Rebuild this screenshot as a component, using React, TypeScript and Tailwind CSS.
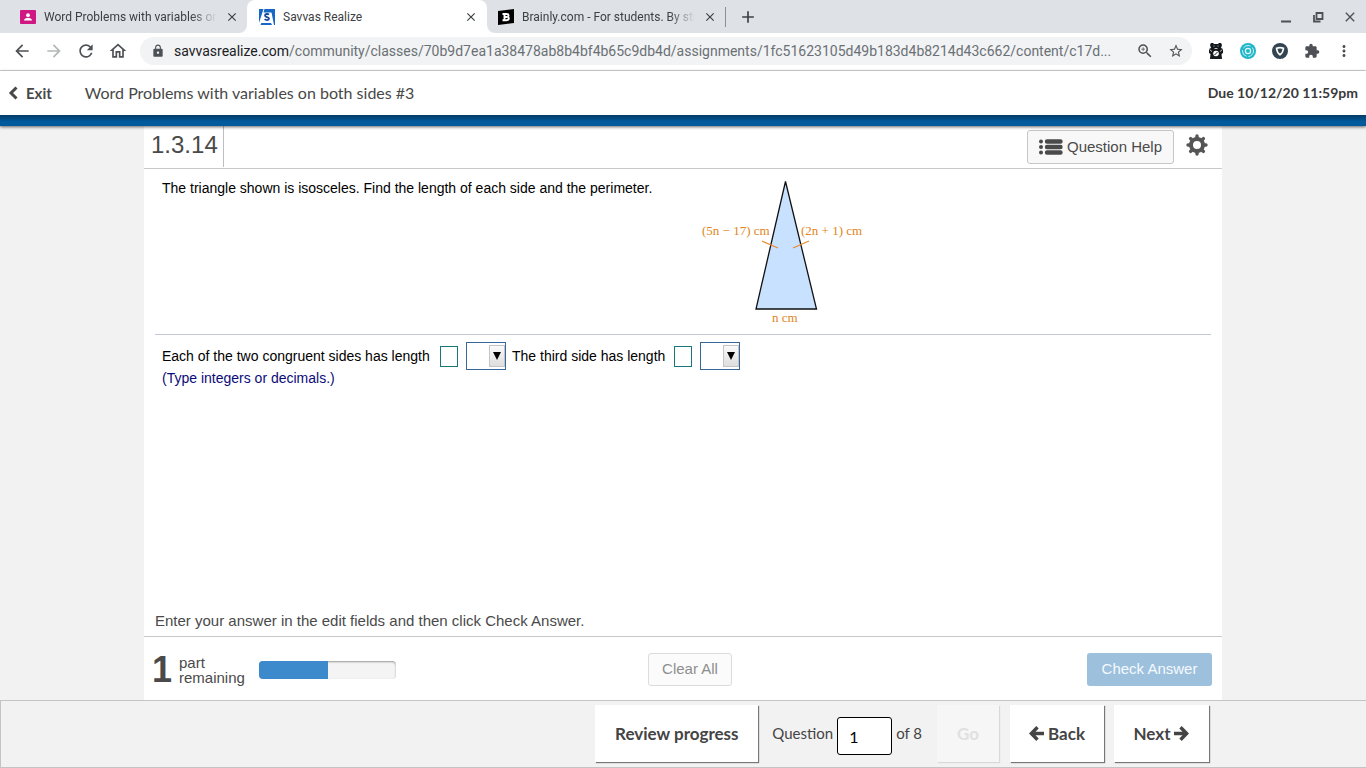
import type { ReactNode } from 'react';
import {
  MdAdd,
  MdArrowBack,
  MdArrowForward,
  MdClose,
  MdExtension,
  MdLock,
  MdMoreVert,
  MdOutlineHome,
  MdRefresh,
  MdStarBorder,
  MdZoomIn,
} from 'react-icons/md';

function ClassroomIcon() {
  return (
    <svg viewBox="0 0 16 14" className="h-[14px] w-4 shrink-0" aria-hidden="true">
      <rect width="16" height="14" rx="1" fill="#d01884" />
      <circle cx="8" cy="5.2" r="1.9" fill="#fff" />
      <path d="M4 10.6c0-2 2.4-2.8 4-2.8s4 .8 4 2.8z" fill="#fff" />
    </svg>
  );
}

function SavvasIcon() {
  return (
    <svg viewBox="0 0 16 16" className="h-4 w-4 shrink-0" aria-hidden="true">
      <path d="M0 0h4.500L0 14zM5.500 0H16v16h-1L12.500 3.500H4.500zM1.500 16l.8-2H12l1 2z" fill="#1668c7" />
      <path d="M10 5.700C8.800 4.600 6 4.700 6 6.500c0 1.900 4 1.200 4 3.100 0 1.800-3 1.900-4.400.6" fill="none" stroke="#184a9c" strokeWidth="1.800" />
    </svg>
  );
}

function BrainlyIcon() {
  return (
    <svg viewBox="0 0 16 16" className="h-4 w-4 shrink-0" aria-hidden="true">
      <path d="M0 2 16 0v14L0 16z" fill="#000" />
      <path d="M4.500 5h4.200c2.400 0 2.200 2.700.6 3 2.200.2 2 3.300-.6 3.300H4.500M6.500 5v6M6.500 8h2.500" fill="none" stroke="#fff" strokeWidth="1.900" />
    </svg>
  );
}

function Tab({ icon, title, active, className }: { icon: ReactNode; title: string; active?: boolean; className: string }) {
  return (
    <div className={`flex items-center ${className}`}>
      {icon}
      <button
        type="button"
        className={`ml-2 min-w-0 flex-1 overflow-hidden text-left text-xs whitespace-nowrap text-[#3c4043] ${
          active ? '' : '[mask-image:linear-gradient(to_right,black_85%,transparent)]'
        }`}
      >
        {title}
      </button>
      <button type="button" aria-label="Close tab" className="ml-2 text-[#3c4043]">
        <MdClose size={14} />
      </button>
    </div>
  );
}

function TabStrip() {
  return (
    <div className="flex h-[33px] bg-[#dee1e6]">
      <div className="flex w-[247px] bg-white">
        <Tab className="w-full rounded-br-lg bg-[#dee1e6] pr-2 pl-5" icon={<ClassroomIcon />} title="Word Problems with variables on" />
      </div>
      <Tab active className="w-60 rounded-t-lg bg-white pr-[9px] pl-3" icon={<SavvasIcon />} title="Savvas Realize" />
      <div className="flex w-[238px] bg-white">
        <Tab className="w-full rounded-bl-lg bg-[#dee1e6] pr-2 pl-[11px]" icon={<BrainlyIcon />} title="Brainly.com - For students. By stu" />
      </div>
      <div className="h-5 w-px self-center bg-[#8b9095]" />
      <button type="button" aria-label="New tab" className="ml-3 text-[#3c4043]">
        <MdAdd size={20} />
      </button>
      <div className="ml-auto flex items-center gap-4 pr-2 text-[#4d5155]">
        <button type="button" aria-label="Minimize">
          <svg viewBox="0 0 16 16" className="h-4 w-4" fill="none" stroke="currentColor" strokeWidth="2">
            <path d="M3 12.500h10" />
          </svg>
        </button>
        <button type="button" aria-label="Restore">
          <svg viewBox="0 0 16 16" className="h-4 w-4" fill="none" stroke="currentColor" strokeWidth="1.800">
            <path d="M6.500 4h6v6h-6zM4 6v6.500h6.500" />
          </svg>
        </button>
        <button type="button" aria-label="Close window">
          <MdClose size={16} />
        </button>
      </div>
    </div>
  );
}

function Toolbar() {
  return (
    <div className="flex h-[38px] items-center border-b border-[#d5d7da] bg-white pr-[14px] pb-px pl-3 text-[#4d5155]">
      <div className="flex gap-3">
        <button type="button" aria-label="Back"><MdArrowBack size={20} /></button>
        <button type="button" aria-label="Forward" className="text-[#b4b6b8]"><MdArrowForward size={20} /></button>
        <button type="button" aria-label="Reload"><MdRefresh size={20} /></button>
        <button type="button" aria-label="Home"><MdOutlineHome size={20} /></button>
      </div>
      <div className="ml-3 flex h-7 min-w-0 flex-1 items-center rounded-full bg-[#f1f3f4] pr-2 pl-[11px]">
        <MdLock size={14} className="shrink-0" />
        <div className="ml-[9px] min-w-0 flex-1 truncate text-sm text-[#6b7074]">
          <span className="text-[#202124]">savvasrealize.com</span>
          /community/classes/70b9d7ea1a38478ab8b4bf4b65c9db4d/assignments/1fc51623105d49b183d4b8214d43c662/content/c17d...
        </div>
        <button type="button" aria-label="Zoom" className="ml-4"><MdZoomIn size={18} /></button>
        <button type="button" aria-label="Bookmark" className="ml-[14px]"><MdStarBorder size={16} /></button>
      </div>
      <div className="ml-4 flex items-center gap-4">
        <button type="button" aria-label="Bear extension">
          <svg viewBox="0 0 16 16" className="h-4 w-4">
            <path d="M3 0h2l1 1h4l1-1h2l1 2-1 3 2 1v4l-1.500 1 .5 5H2l.5-5L1 10V6l2-1-1-3z" fill="#15191c" />
            <circle cx="8" cy="10.500" r="2.800" fill="#fff" />
            <path d="M6.500 12 9.500 9" stroke="#15191c" />
            <path d="M1.500 6.500 4 8.500M14.500 6.500 12 8.500M5.500 3h1M9.500 3h1M6.500 5.500h3" stroke="#b9c4c8" />
          </svg>
        </button>
        <button type="button" aria-label="Sync extension">
          <svg viewBox="0 0 16 16" className="h-4 w-4" fill="none">
            <circle cx="8" cy="8" r="8" fill="#20b5c8" />
            <circle cx="8" cy="8" r="5.500" stroke="#c9f4f8" strokeDasharray="8 2" />
            <circle cx="8" cy="8" r="2.600" stroke="#e2fafc" strokeWidth="1.200" />
          </svg>
        </button>
        <button type="button" aria-label="Shield extension">
          <svg viewBox="0 0 16 16" className="h-4 w-4" fill="none">
            <circle cx="8" cy="8" r="8" fill="#344552" />
            <path d="M4.500 5.200Q8 4 11.500 5.200 11.200 9.200 8 11.800 4.800 9.200 4.500 5.200z" stroke="#fff" strokeWidth="1.600" />
          </svg>
        </button>
        <button type="button" aria-label="Extensions"><MdExtension size={16} /></button>
        <button type="button" aria-label="Menu"><MdMoreVert size={18} className="-mx-px" /></button>
      </div>
    </div>
  );
}

function AssignmentHeader() {
  return (
    <header className="relative z-10 font-['Lato',sans-serif] text-[#484848] shadow-[0_1px_3px_rgba(0,0,0,0.6)]">
      <div className="flex h-11 items-center bg-white px-2">
        <button type="button" className="flex items-center gap-2 text-[15px] font-bold">
          <svg viewBox="0 0 10 14" className="h-[14px] w-[10px]" fill="none" stroke="currentColor" strokeWidth="3" aria-hidden="true">
            <path d="M8.500 1.500 3 7l5.500 5.500" />
          </svg>
          Exit
        </button>
        <h1 className="ml-[33px] text-base">Word Problems with variables on both sides #3</h1>
        <p className="ml-auto text-sm font-bold text-[#3a3a3a]">Due 10/12/20 11:59pm</p>
      </div>
      <div className="h-[11px] bg-[linear-gradient(#053a66,#005a9c_60%)]" />
    </header>
  );
}

function Triangle() {
  return (
    <svg viewBox="0 0 170 150" className="h-[150px] w-[170px]" role="img" aria-label="Isosceles triangle">
      <path d="M86.500 5.500 117.500 133H57z" fill="#c7e1ff" stroke="#111" strokeWidth="1.300" />
      <path d="M63 65l16 7M110 65l-16 7" stroke="#ea8a2e" strokeWidth="1.200" />
      <g className="font-['Liberation_Serif',serif] text-[13px]" fill="#e0851b">
        <text x="3" y="59">(5n − 17) cm</text>
        <text x="102" y="59">(2n + 1) cm</text>
        <text x="73" y="146">n cm</text>
      </g>
    </svg>
  );
}

function UnitSelect({ label }: { label: string }) {
  return (
    <span className="relative ml-2 flex h-7 w-10 border border-[#37689b] bg-white">
      <select aria-label={label} className="w-full appearance-none bg-transparent text-sm outline-none">
        <option value=""></option>
        <option value="cm">cm</option>
        <option value="cm2">cm²</option>
      </select>
      <span className="pointer-events-none absolute top-[2px] right-0 flex h-[22px] w-4 items-center justify-center border border-[#c4c4c4] bg-[linear-gradient(#fafafa,#dedede)]">
        <svg viewBox="0 0 8 8" className="h-2 w-2" aria-hidden="true">
          <path d="M0 0h8L4 8z" />
        </svg>
      </span>
    </span>
  );
}

function AnswerBox({ label }: { label: string }) {
  return <input type="text" aria-label={label} className="ml-[5px] h-[21px] w-[18px] border border-[#19777c] bg-white text-sm outline-none" />;
}

function ListIcon() {
  return (
    <svg viewBox="0 0 24 16" className="h-4 w-6" stroke="currentColor" strokeLinecap="round" aria-hidden="true">
      <path d="M8 2.500h13.500M8 8h13.500M8 13.500h13.500" strokeWidth="4.400" />
      <path d="M2 2.500h.01M2 8h.01M2 13.500h.01" strokeWidth="4" />
    </svg>
  );
}

function GearIcon() {
  return (
    <svg viewBox="0 0 22 22" className="h-[22px] w-[22px]" fill="none" stroke="currentColor" strokeLinecap="round" aria-hidden="true">
      <circle cx="11" cy="11" r="6" strokeWidth="4" />
      <path d="M11 2v2M11 18v2M2 11h2M18 11h2M4.600 4.600 6 6M16 16l1.400 1.400M4.600 17.400 6 16M16 6l1.400-1.400" strokeWidth="3.400" />
    </svg>
  );
}

function Exercise() {
  return (
    <main className="flex flex-1 flex-col bg-[#f2f2f2] px-36 font-['Liberation_Sans',sans-serif]">
      <div className="flex flex-1 flex-col bg-white">
        <div className="flex h-[43px] border-b border-[#c8c8c8] text-[#4a4a4a]">
          <h2 className="mb-px flex w-20 items-center border-r border-[#bdbdc5] pb-1 pl-[7px] text-2xl">1.3.14</h2>
          <button type="button" className="mt-1 ml-auto flex h-[34px] w-[147px] items-center justify-center gap-1 rounded-[3px] border border-[#c6c6c6] bg-[#f8f8f8] text-[15px]">
            <ListIcon />
            Question Help
          </button>
          <button type="button" aria-label="Settings" className="mr-[14px] mb-1 ml-3 text-[#555]">
            <GearIcon />
          </button>
        </div>

        <section className="mx-[11px] flex h-[166px] border-b border-[#c5cad8] pl-[7px] text-sm text-black">
          <p className="pt-[9px]">The triangle shown is isosceles. Find the length of each side and the perimeter.</p>
          <div className="ml-[47px] pt-[7px]">
            <Triangle />
          </div>
        </section>

        <section className="pt-[7px] pl-[18px] text-sm text-black">
          <div className="flex h-7 items-center">
            <span className="w-[273px]">Each of the two congruent sides has length</span>
            <AnswerBox label="Length of congruent sides" />
            <UnitSelect label="Unit of congruent sides" />
            <span className="ml-[6px] w-[157px]">The third side has length</span>
            <AnswerBox label="Length of third side" />
            <UnitSelect label="Unit of third side" />
          </div>
          <p className="leading-4 text-[#0b0b78]">(Type integers or decimals.)</p>
        </section>

        <p className="mt-auto px-[11px] pb-1 text-[15px] text-[#4a4a4a]">Enter your answer in the edit fields and then click Check Answer.</p>
        <div className="grid h-16 grid-cols-[1fr_auto_1fr] items-center border-t border-[#c8c8c8] pt-[2px] pr-[10px] pl-2 text-[15px] text-[#4a4a4a]">
          <div className="flex items-center">
            <span className="w-[27px] text-[36px] leading-9 font-bold">1</span>
            <span className="w-20 leading-[15px]">part<br />remaining</span>
            <div role="progressbar" aria-label="Progress" aria-valuenow={50} className="h-[18px] w-[137px] overflow-hidden rounded bg-[#f4f4f4] shadow-[inset_0_1px_2px_#999]">
              <div className="h-full w-1/2 bg-[#3c89cb]" />
            </div>
          </div>
          <button type="button" className="ml-4 h-[33px] w-[84px] rounded-[3px] border border-[#dcdcdc] bg-[#fbfbfb] text-[#8e8e8e]">Clear All</button>
          <button type="button" className="h-[33px] w-[125px] justify-self-end rounded-[3px] bg-[#9dc0dc] text-[#f5fafe]">Check Answer</button>
        </div>
      </div>
    </main>
  );
}

function BoldArrow({ className }: { className?: string }) {
  return (
    <svg viewBox="0 0 15 15" className={`h-[15px] w-[15px] ${className ?? ''}`} fill="none" stroke="currentColor" strokeWidth="3.400" aria-hidden="true">
      <path d="M15 7.500H3M8.500 1.200 2.300 7.500l6.200 6.300" />
    </svg>
  );
}

function FooterNav() {
  return (
    <footer className="flex h-[68px] items-start justify-end border border-r-0 border-[#c4c4c4] bg-[#f2f2f2] pt-1 pr-[157px] font-['Lato',sans-serif] text-[17px] text-[#444]">
      <button type="button" className="h-[57px] w-[163px] bg-white font-bold shadow-[1px_1px_1px_#777]">Review progress</button>
      <label htmlFor="question-number" className="ml-[14px] flex h-[57px] items-center text-[15px]">Question</label>
      <input id="question-number" type="text" defaultValue="1" className="mt-3 ml-1 h-[38px] w-[55px] rounded-[3px] border border-black bg-white px-[11px] text-base text-black outline-none" />
      <span className="ml-1 flex h-[57px] items-center text-[15px]">of 8</span>
      <button type="button" disabled className="ml-[15px] h-[57px] w-[62px] bg-[#f6f6f6] font-bold text-[#e0e0e0] shadow-[1px_1px_1px_#d8d8d8]">Go</button>
      <button type="button" className="ml-[11px] flex h-[57px] w-[94px] items-center justify-center gap-1 bg-white font-bold shadow-[1px_1px_1px_#777]">
        <BoldArrow />
        Back
      </button>
      <button type="button" className="ml-[10px] flex h-[57px] w-[95px] items-center justify-center gap-1 bg-white font-bold shadow-[1px_1px_1px_#777]">
        Next
        <BoldArrow className="rotate-180" />
      </button>
    </footer>
  );
}

export default function App() {
  return (
    <div className="flex min-h-screen flex-col bg-white">
      <div className="font-['Roboto',sans-serif]">
        <TabStrip />
        <Toolbar />
      </div>
      <AssignmentHeader />
      <Exercise />
      <FooterNav />
    </div>
  );
}
